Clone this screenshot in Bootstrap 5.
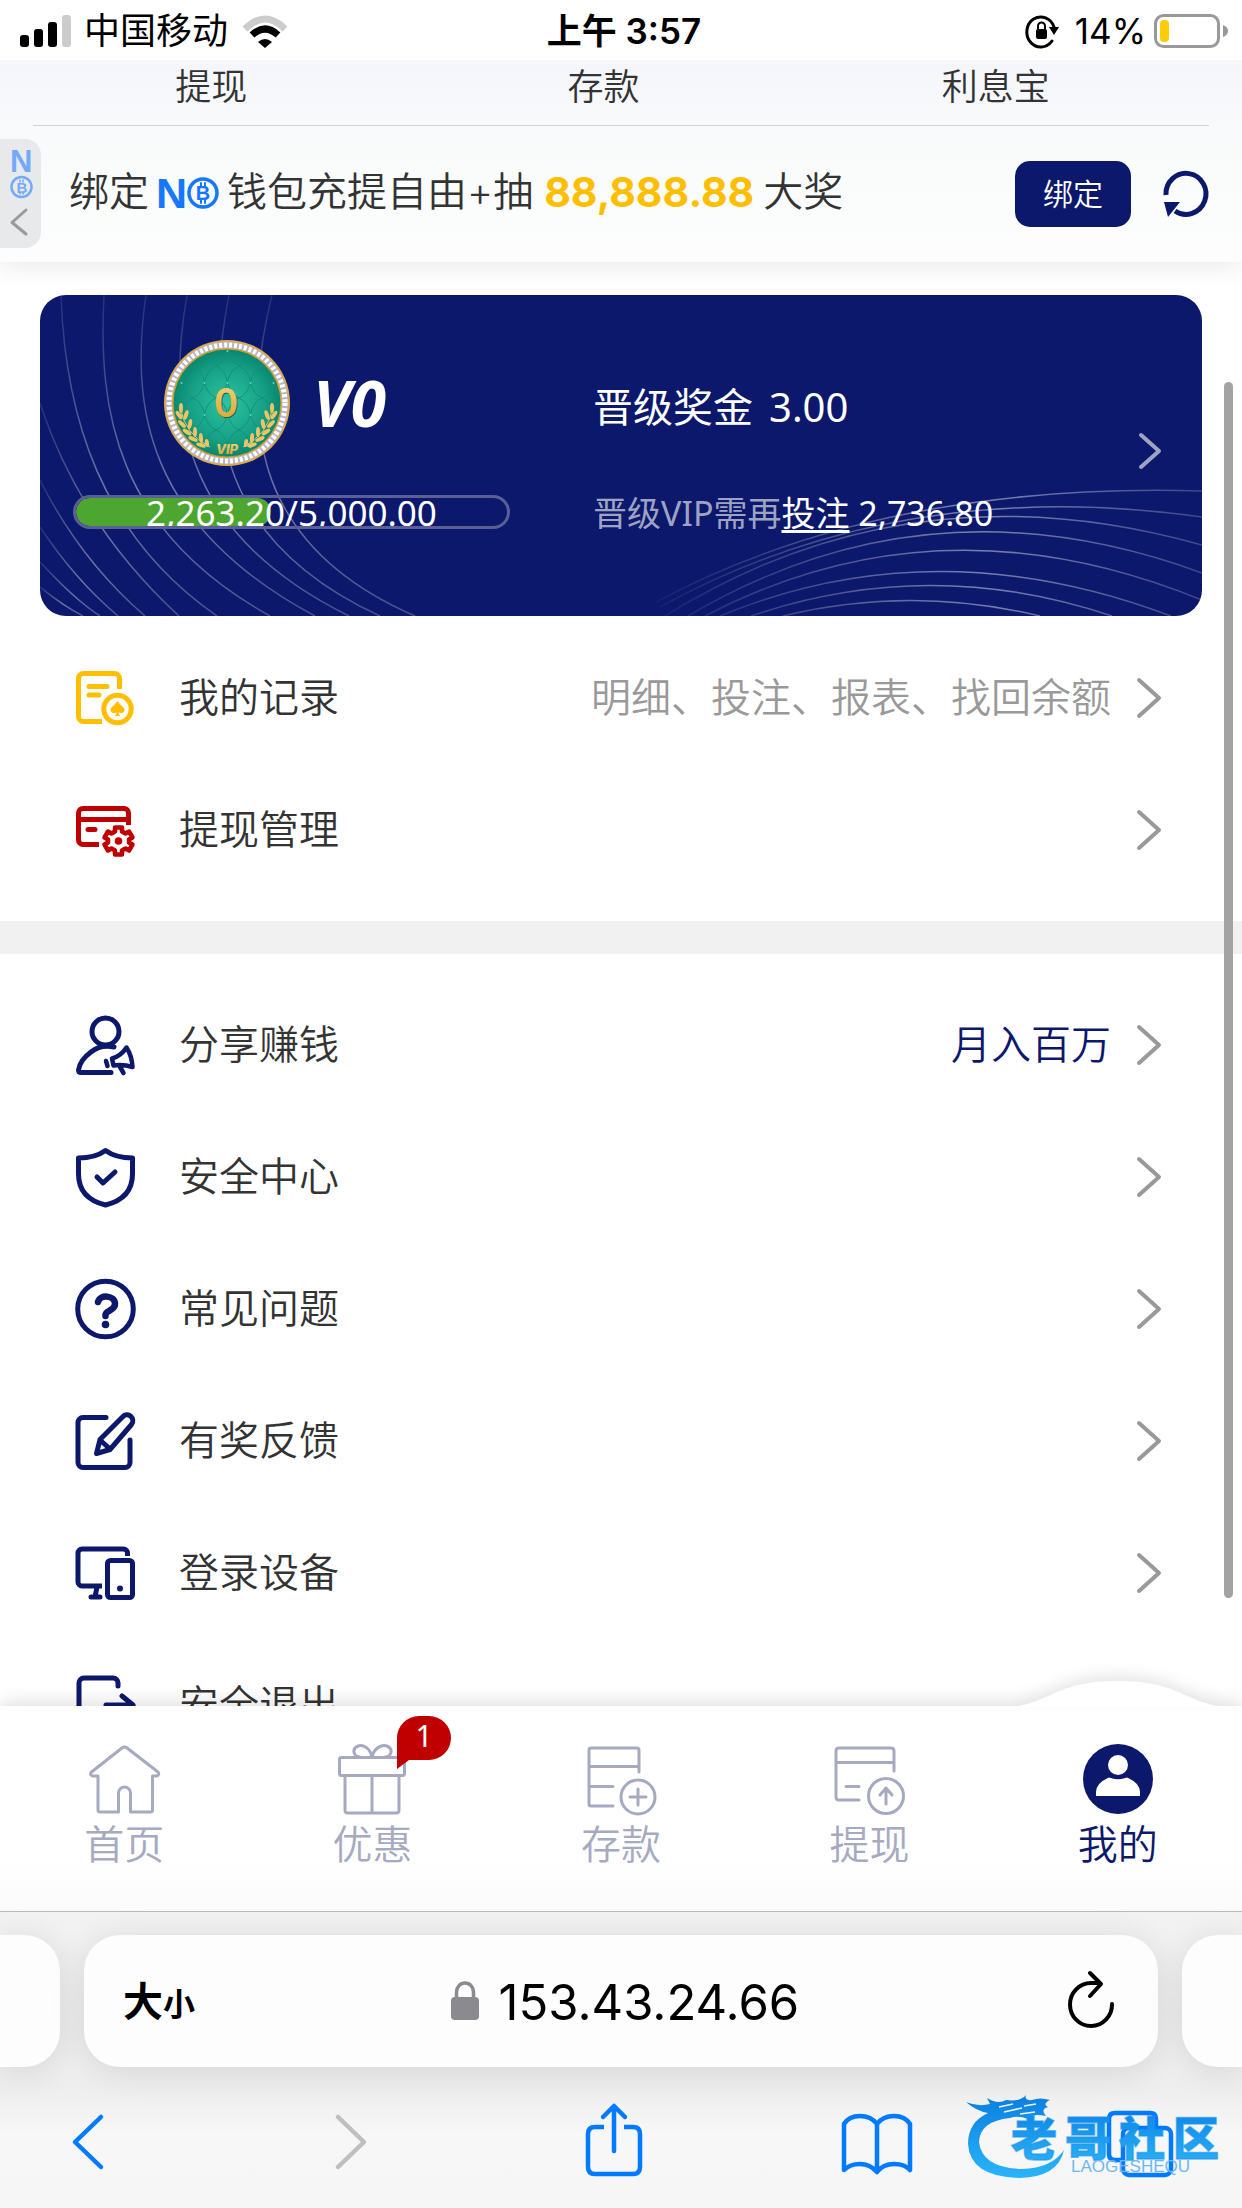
<!DOCTYPE html>
<html lang="zh-CN">
<head>
<meta charset="utf-8">
<meta name="viewport" content="width=device-width, initial-scale=1">
<title>我的</title>
<link href="https://cdn.jsdelivr.net/npm/bootstrap@5.3.0/dist/css/bootstrap.min.css" rel="stylesheet">
<style>
:root{--navy:#0c186c;--ink:#333;--mute:#a6aac1;--ios:#007aff}
html,body{height:100%}
body{font-family:Inter,"Noto Sans CJK SC",sans-serif;font-size:40px;line-height:48px;color:var(--ink);background:#fff;overflow:hidden}
a{color:inherit;text-decoration:none}
svg{display:block;flex:none;overflow:visible}
button{border:0;background:none;padding:0;color:inherit}
.ln{fill:none;stroke:currentColor;stroke-linecap:round;stroke-linejoin:round}
.statusbar{height:60px;padding:2px 14px 0 20px;font-size:35px;line-height:58px;color:#000}
.clock{font-weight:600}
.sidecell{flex:1}
.carrier{font-size:36px;margin:0 14px 0 13px}
.topzone{background:linear-gradient(#f4f6fb,#f9fbfb 45%,#fdfdfd);box-shadow:0 4px 24px rgba(0,0,0,.09)}
.quick{padding:3px 50px 14px 15px;font-size:36px;font-weight:350}
.rule{height:1px;background:#d0d3d5;margin:0 33px}
.bindrow{height:136px;padding:0 33px 0 69px}
.bindtext{font-size:40px;padding-bottom:4px;font-weight:350}
.prize{color:#ffbf00;font-weight:700;font-size:41px;margin:0 9px 0 11px}
.bindbtn{background:var(--navy);color:#fff;border-radius:15px;font-size:30px;width:116px;height:66px;line-height:60px;font-weight:350}
.sidetab{left:0;top:79px;width:41px;height:109px;background:#e8e9ea;border-radius:0 16px 16px 0}
.vip{margin:33px 40px 16px;background:var(--navy);border-radius:26px;color:#fff;height:321px;overflow:hidden;font-family:"Noto Sans","Noto Sans CJK SC",sans-serif}
.waves{inset:0}
.vipbody{height:100%;padding:0 40px 0 33px}
.vipleft{width:437px;margin-right:83px;padding-top:45px}
.level{font-size:64px;line-height:64px;font-weight:700;font-style:italic}
.barwrap{height:34px;border:3px solid #5a6096;border-radius:17px;margin-top:29px;font-size:35px;line-height:30px;overflow:hidden}
.barfill{background:#4da62f;border-radius:14px;height:100%}
.vipright{padding-top:88px}
.need{font-size:34px;margin-top:58px;color:#9ea3c4}
.need a{color:#fff;text-decoration:underline;text-decoration-thickness:3px;text-underline-offset:4px}
.menurow{height:132px;padding:0 81px 0 75px;font-size:40px;font-weight:350}
.menurow .name{margin-left:42px}
.menurow .note{margin-right:26px;color:#999}
.menurow .note.pro{color:var(--navy)}
.band{height:33px;background:#f1f1f1;margin:25px 0}
.navyc{color:var(--navy)}
.thumb{right:9px;top:382px;bottom:610px;width:9px;border-radius:5px;background:#a3a3a3;z-index:5}
.tabbar{height:205px;background:linear-gradient(#fff 75%,#fbfbfb);box-shadow:0 -2px 18px rgba(0,0,0,.15);color:var(--mute);z-index:3;padding-top:37px;font-weight:350}
.tabbar a{gap:6px}
.bump{left:50%;margin-left:-105px;filter:drop-shadow(0 -6px 7px rgba(0,0,0,.09));top:-62px}
.bubble{left:149px;top:-27px}
.browser{height:297px;border-top:1px solid #b9b9b9;background:linear-gradient(#f2f2f2,#eee 60%,#f7f7f7 75%,#f6f6f6);z-index:4}
.cards{margin-top:23px;gap:24px;height:132px;overflow:visible}
.urlcard,.peek{background:#fdfdfd;box-shadow:0 4px 34px rgba(0,0,0,.11)}
.urlcard{border-radius:36px;padding:4px 44px 0 39px}
.peek{width:60px}
.peek.l{border-radius:0 36px 36px 0}.peek.r{border-radius:36px 0 0 36px}
.side{width:74px;color:#000;font-weight:700}
.side.wide{width:86px}
.small-char{font-size:32px}
.lock{margin:0 20px 4px 0;color:#8a8a8f}
.url{border:0;background:none;outline:0;padding:0;width:300px;font-size:49px;line-height:60px;color:#000}
.tools{padding:36px 66px 0 52px;color:var(--ios);height:110px}
.tools button{width:72px;display:flex;justify-content:center}
.mark-logo{right:18px;bottom:26px}
</style>
</head>
<body>
<div class="d-flex flex-column vh-100 position-relative">
<header class="statusbar d-flex align-items-center flex-shrink-0 bg-white">
  <div class="sidecell d-flex align-items-center">
    <svg width="51" height="32" viewBox="0 0 51 32"><rect y="20" width="9" height="12" rx="3"/><rect x="14" y="14" width="9" height="18" rx="3"/><rect x="28" y="7" width="9" height="25" rx="3"/><rect x="42" width="9" height="32" rx="3" fill="#ccc"/></svg>
    <span class="carrier">中国移动</span>
    <svg width="46" height="33" viewBox="0 0 46 33"><path d="M3 14Q23-6 43 14" fill="none" stroke="#ccc" stroke-width="7"/><path d="M10 20Q23 8 36 20" fill="none" stroke="#000" stroke-width="7"/><path d="M16 27q7-6 14 0l-7 6z"/></svg>
  </div>
  <div class="clock">上午 3:57</div>
  <div class="sidecell d-flex align-items-center justify-content-end">
    <svg width="32" height="34" viewBox="0 0 32 34"><path class="ln" stroke-width="3" d="M27 13A14 15 0 1 0 25 27"/><path d="M22 13h10l-5 8z"/><rect x="9" y="15" width="11" height="10" rx="2"/><path class="ln" stroke-width="2" d="M11 15v-3a3.500 3.500 0 0 1 7 0v3"/></svg>
    <span class="ms-3 me-2">14%</span>
    <svg width="74" height="34" viewBox="0 0 74 34"><rect x="1.500" y="1.500" width="63" height="31" rx="8" fill="none" stroke="#999" stroke-width="3"/><rect x="6" y="6" width="9" height="22" rx="4" fill="#ffcc0a"/><path d="M69 11q5 2 5 6t-5 6z" fill="#999"/></svg>
  </div>
</header>

<main class="flex-fill overflow-hidden" style="min-height:0">
  <section class="topzone position-relative">
    <nav class="quick d-flex text-center">
      <a href="#" class="col">提现</a><a href="#" class="col">存款</a><a href="#" class="col">利息宝</a>
    </nav>
    <div class="rule"></div>
    <div class="bindrow d-flex align-items-center">
      <div class="bindtext d-flex align-items-center flex-fill text-nowrap">绑定
        <svg class="ms-2 me-2" width="62" height="34" viewBox="0 0 62 34" style="color:#1677ff"><text x="-1" y="33" font-family="Liberation Sans" font-weight="700" font-size="43" fill="currentColor">N</text><circle cx="46" cy="18" r="14" class="ln" stroke-width="3.500"/><text x="46" y="25" text-anchor="middle" font-family="Liberation Sans" font-weight="700" font-size="20" fill="currentColor">B</text><path class="ln" stroke-width="2" d="M44 8v3M48 8v3M44 25v3M48 25v3"/></svg>
        <span>钱包充提自由+抽</span><span class="prize">88,888.88</span><span>大奖</span>
      </div>
      <button class="bindbtn me-4" type="button">绑定</button>
      <button type="button" aria-label="刷新" class="navyc ms-2"><svg width="46" height="46" viewBox="0 0 46 46"><path d="M3 24A20 20.500 0 1 1 12 40" fill="none" stroke="currentColor" stroke-width="5"/><path d="M1 31h16L5 46z" fill="currentColor"/></svg></button>
    </div>
    <a href="#" class="sidetab position-absolute d-block" aria-label="钱包">
      <svg width="41" height="109" viewBox="0 0 41 109" style="color:#73a9f8"><text x="10" y="33" font-family="Liberation Sans" font-weight="700" font-size="31" fill="currentColor">N</text><circle cx="21.500" cy="48" r="10" class="ln" stroke-width="2.500"/><text x="22" y="53.500" text-anchor="middle" font-family="Liberation Sans" font-weight="700" font-size="15" fill="currentColor">B</text><path class="ln" stroke-width="1.500" d="M20 41v2M23 41v2M20 53v2M23 53v2"/><path d="M26 71L12 83.500L26 95" class="ln" style="stroke:#999" stroke-width="3"/></svg>
    </a>
  </section>

  <section class="vip position-relative">
    <svg class="waves position-absolute" width="1162" height="321" viewBox="0 0 1162 321" fill="none" stroke="#fff" stroke-width="1.500">
      <defs><linearGradient id="wl" x1="0" y1="0" x2="0" y2="1"><stop offset="0" stop-color="#fff" stop-opacity=".1"/><stop offset=".6" stop-color="#fff" stop-opacity=".4"/><stop offset="1" stop-color="#fff" stop-opacity=".25"/></linearGradient>
      <linearGradient id="wr" gradientUnits="userSpaceOnUse" x1="610" y1="0" x2="1162" y2="0"><stop offset="0" stop-color="#fff" stop-opacity=".03"/><stop offset=".6" stop-color="#fff" stop-opacity=".45"/><stop offset="1" stop-color="#fff" stop-opacity=".2"/></linearGradient></defs>
      <g stroke="url(#wl)"><path d="M232 0C205 110 200 245 375 321"/><path d="M189 0C168 110 165 240 340 321"/><path d="M147 0C128 110 135 235 309 321"/><path d="M106 0C90 110 105 230 275 321"/><path d="M64 0C58 115 75 235 230 321"/><path d="M21 0C25 120 60 240 177 321"/><path d="M0 108Q40 230 139 321"/><path d="M0 185Q40 265 105 321"/><path d="M0 232Q35 285 78 321"/><path d="M0 267Q35 305 60 321"/><path d="M0 292Q25 312 43 321"/></g>
      <g stroke="url(#wr)"><path d="M616 307Q840 187 1162 196"/><path d="M620 312Q860 180 1162 222"/><path d="M625 321Q870 168 1162 250"/><path d="M648 321Q890 178 1162 278"/><path d="M665 321Q900 198 1162 305"/><path d="M680 321Q895 232 1131 321"/><path d="M711 321Q890 260 1072 321"/><path d="M743 321Q870 290 1000 321"/></g>
    </svg>
    <div class="vipbody position-relative d-flex">
      <div class="vipleft">
        <div class="d-flex align-items-center" style="padding-left:91px">
          <svg width="126" height="126" viewBox="0 0 126 126">
            <defs><radialGradient id="em"><stop offset="0" stop-color="#2cc3a2"/><stop offset=".7" stop-color="#16a085"/><stop offset="1" stop-color="#08866e"/></radialGradient>
            <linearGradient id="gold" x1="0" y1="0" x2="0" y2="1"><stop offset="0" stop-color="#f3d77d"/><stop offset="1" stop-color="#d99f2b"/></linearGradient>
            <pattern id="quilt" width="23" height="32" patternUnits="userSpaceOnUse" x="6" y="10"><path d="M11.500 0Q14 12 23 16Q14 20 11.500 32Q9 20 0 16Q9 12 11.500 0" fill="none" stroke="#128f78" stroke-width="1"/><circle cx="11.500" cy="1" r="1" fill="#5ad8bd"/></pattern></defs>
            <circle cx="63" cy="63" r="63" fill="#d9ae4a"/><circle cx="63" cy="63" r="58" fill="none" stroke="#b9b4cc" stroke-width="6"/><circle cx="63" cy="63" r="58" fill="none" stroke="#fff" stroke-width="5" stroke-dasharray="3 2"/>
            <circle cx="63" cy="63" r="54" fill="url(#em)" stroke="#c99d32"/><circle cx="63" cy="63" r="53" fill="url(#quilt)"/>
            <text x="63" y="78" text-anchor="middle" font-family="Lato" font-weight="900" font-size="39" fill="#0b6b5a">0</text><text x="62" y="77" text-anchor="middle" font-family="Lato" font-weight="900" font-size="39" fill="url(#gold)">0</text>
            <g id="laurel" fill="#eac467" stroke="#eac467"><path d="M16 66Q20 94 46 107" fill="none" stroke-width="1"/><g stroke="none"><ellipse cx="17" cy="68" rx="2" ry="5"/><ellipse cx="15" cy="75" rx="2" ry="5" transform="rotate(-35 15 75)"/><ellipse cx="22" cy="75" rx="2" ry="5" transform="rotate(20 22 75)"/><ellipse cx="18" cy="84" rx="2" ry="5" transform="rotate(-45 18 84)"/><ellipse cx="26" cy="84" rx="2" ry="5" transform="rotate(10 26 84)"/><ellipse cx="23" cy="92" rx="2" ry="5" transform="rotate(-55 23 92)"/><ellipse cx="31" cy="92" rx="2" ry="5" transform="rotate(0 31 92)"/><ellipse cx="29" cy="99" rx="2" ry="5" transform="rotate(-65 29 99)"/><ellipse cx="37" cy="98" rx="2" ry="5" transform="rotate(-5 37 98)"/><ellipse cx="37" cy="105" rx="2" ry="5" transform="rotate(-75 37 105)"/><ellipse cx="43" cy="103" rx="2" ry="4" transform="rotate(-10 43 103)"/></g></g>
            <use href="#laurel" transform="translate(125 0) scale(-1 1)"/>
            <text x="63" y="114" text-anchor="middle" font-family="Inter" font-weight="800" font-style="italic" font-size="13" fill="url(#gold)">VIP</text>
          </svg>
          <span class="level" style="margin-left:23px">V0</span>
        </div>
        <div class="barwrap position-relative" role="progressbar" aria-valuenow="2263" aria-valuemin="0" aria-valuemax="5000" aria-label="晋级进度">
          <div class="barfill" style="width:45.264%"></div>
          <div class="position-absolute top-0 start-0 w-100 text-center">2,263.20/5,000.00</div>
        </div>
      </div>
      <div class="vipright flex-fill text-nowrap">
        <div>晋级奖金<span class="ms-3">3.00</span></div>
        <div class="need">晋级VIP需再<a href="#">投注</a> <span class="text-white">2,736.80</span></div>
      </div>
      <svg class="align-self-center ln" width="24" height="40" viewBox="0 0 24 40" style="color:#9ea3c4;margin-top:-9px" stroke-width="4"><path d="M3 4L21 20L3 36"/></svg>
    </div>
  </section>

  <nav>
    <a href="#" class="menurow d-flex align-items-center">
      <svg class="ln" width="62" height="62" viewBox="0 0 62 62" style="color:#ffbf00" stroke-width="5"><path stroke-linecap="butt" d="M44.500 22V11.500a5 5 0 0 0-5-5h-31a5 5 0 0 0-5 5v38a5 5 0 0 0 5 5H27"/><path d="M14 19.500h18M14 28h10"/><circle cx="42.500" cy="42" r="13.700"/><path d="M42.500 34q2 3 5 5.500c5 4-.5 9-4 5.500q0 2 1.500 4h-5q1.500-2 1.500-4c-3.500 3.500-9-1.500-4-5.500q3-2.500 5-5.500z" fill="currentColor" stroke="none"/></svg>
      <span class="name flex-fill">我的记录</span><span class="note">明细、投注、报表、找回余额</span>
      <svg class="ln" width="24" height="40" viewBox="0 0 24 40" style="color:#999" stroke-width="4"><path d="M2 2L22 20L2 38"/></svg>
    </a>
    <a href="#" class="menurow d-flex align-items-center">
      <svg class="ln" width="62" height="62" viewBox="0 0 62 62" style="color:#c00000" stroke-width="5"><path stroke-linecap="butt" d="M53.500 26V14a4.500 4.500 0 0 0-4.500-4.500H8A4.500 4.500 0 0 0 3.500 14v27a4.500 4.500 0 0 0 4.500 4.500h16M3.500 20.500h50"/><path d="M13 30.500h7"/><path stroke-width="4.500" d="M40 28.500h7v4l3.500 2 3.500-2 3.500 6-3.500 2v3l3.500 2-3.500 6-3.500-2-3.500 2v4h-7v-4l-3.500-2-3.500 2-3.500-6 3.500-2v-3l-3.500-2 3.500-6 3.500 2 3.500-2z"/><circle cx="43.500" cy="42" r="3.800" fill="currentColor" stroke="none"/></svg>
      <span class="name flex-fill">提现管理</span>
      <svg class="ln" width="24" height="40" viewBox="0 0 24 40" style="color:#999" stroke-width="4"><path d="M2 2L22 20L2 38"/></svg>
    </a>
  </nav>
  <div class="band"></div>
  <nav>
    <a href="#" class="menurow d-flex align-items-center">
      <svg class="ln navyc" width="62" height="62" viewBox="0 0 62 62" stroke-width="5"><circle cx="30.500" cy="17.500" r="13.500"/><path d="M39 33Q26 30 16 38Q5 46 3.500 56q0 2.500 2.500 2.500h30"/><path stroke-width="4.500" d="M31 47l1.500 5M37 44.500Q46 42 51.500 33.500Q57 42 57.500 53Q48 50 38.500 51.500zM45 53l3.500 6"/></svg>
      <span class="name flex-fill">分享赚钱</span><span class="note pro">月入百万</span>
      <svg class="ln" width="24" height="40" viewBox="0 0 24 40" style="color:#999" stroke-width="4"><path d="M2 2L22 20L2 38"/></svg>
    </a>
    <a href="#" class="menurow d-flex align-items-center">
      <svg class="ln navyc" width="62" height="62" viewBox="0 0 62 62" stroke-width="5"><path d="M30.500 4.500C23 10 14 12 3.500 12v16C3.500 45 14 55 30.500 59C47 55 57.500 45 57.500 28V12C47 12 38 10 30.500 4.500z"/><path d="M22 31l6 6 12-11"/></svg>
      <span class="name flex-fill">安全中心</span>
      <svg class="ln" width="24" height="40" viewBox="0 0 24 40" style="color:#999" stroke-width="4"><path d="M2 2L22 20L2 38"/></svg>
    </a>
    <a href="#" class="menurow d-flex align-items-center">
      <svg class="ln navyc" width="62" height="62" viewBox="0 0 62 62" stroke-width="5"><circle cx="30.500" cy="31" r="27.800"/><path stroke-width="6.500" d="M23 24c2-8 17-7 17 2 0 7-9.500 6-9.500 11v1"/><circle cx="30.500" cy="46.500" r="3.800" fill="currentColor" stroke="none"/></svg>
      <span class="name flex-fill">常见问题</span>
      <svg class="ln" width="24" height="40" viewBox="0 0 24 40" style="color:#999" stroke-width="4"><path d="M2 2L22 20L2 38"/></svg>
    </a>
    <a href="#" class="menurow d-flex align-items-center">
      <svg class="ln navyc" width="62" height="62" viewBox="0 0 62 62" stroke-width="5"><path d="M31 7.500H8A5 5 0 0 0 3 12.500v40a5 5 0 0 0 5 5h42a5 5 0 0 0 5-5V30"/><path d="M21.500 43.500l3.500-14L48 6.500c5-5 13 2 8.500 8L35 39.500zM25 30l10 9"/></svg>
      <span class="name flex-fill">有奖反馈</span>
      <svg class="ln" width="24" height="40" viewBox="0 0 24 40" style="color:#999" stroke-width="4"><path d="M2 2L22 20L2 38"/></svg>
    </a>
    <a href="#" class="menurow d-flex align-items-center">
      <svg class="ln navyc" width="62" height="62" viewBox="0 0 62 62" stroke-width="5"><path stroke-linecap="butt" d="M52.500 14v-3a4 4 0 0 0-4-4H7a4 4 0 0 0-4 4v29a4 4 0 0 0 4 4h20"/><path d="M22 45l-2 10M16 55h9"/><rect x="32.500" y="18.500" width="25" height="37" rx="3"/><circle cx="45" cy="46.500" r="3" fill="currentColor" stroke="none"/></svg>
      <span class="name flex-fill">登录设备</span>
      <svg class="ln" width="24" height="40" viewBox="0 0 24 40" style="color:#999" stroke-width="4"><path d="M2 2L22 20L2 38"/></svg>
    </a>
    <a href="#" class="menurow d-flex align-items-center">
      <svg class="ln navyc" width="62" height="62" viewBox="0 0 62 62" stroke-width="5"><path d="M43 12V9a5 5 0 0 0-5-5H9a5 5 0 0 0-5 5v44a5 5 0 0 0 5 5h29a5 5 0 0 0 5-5v-3M31 31h26M47 22l11 9-11 9"/></svg>
      <span class="name flex-fill">安全退出</span>
    </a>
  </nav>
</main>
<div class="thumb position-absolute"></div>

<nav class="tabbar d-flex flex-shrink-0 position-relative text-center">
  <a href="#" class="col d-flex flex-column align-items-center"><svg class="ln" width="72" height="72" viewBox="0 0 72 72" stroke-width="3"><path d="M10 33H5q-4-1-1.500-4L34 5q2.500-2 5 0L70 29q2 3-1.500 4H64.500V67q0 2-2 2H42.500V50a6 6 0 0 0-12 0V69H12q-2 0-2-2z"/></svg>首页</a>
  <a href="#" class="col d-flex flex-column align-items-center position-relative"><svg class="ln" width="72" height="72" viewBox="0 0 72 72" stroke-width="3"><rect x="2.500" y="14.500" width="65" height="18" rx="2"/><path d="M8 33v34q0 3 3 3h48q3 0 3-3V33M35 33v37M35 14C33 5 26 1 21 3C14 6 17 14 23 14M35 14C37 5 45 1 50 3C57 6 54 14 48 14"/></svg>优惠
    <svg class="bubble position-absolute" width="54" height="54" viewBox="0 0 54 54"><path d="M0 53V22A22 22 0 0 1 22 0H32A22 22 0 0 1 32 44H12z" fill="#c00000"/><text x="27" y="31" text-anchor="middle" font-family="Noto Sans" font-weight="400" font-size="30" fill="#fff">1</text></svg></a>
  <a href="#" class="col d-flex flex-column align-items-center"><svg class="ln" width="72" height="72" viewBox="0 0 72 72" stroke-width="3"><path d="M54 29V7q0-2-2-2H6Q4 5 4 7V61q0 2 2 2H28M4 23.500h50M4 43.500h24"/><circle cx="53" cy="54" r="17"/><path d="M53 46v16M45 54h16"/></svg>存款</a>
  <a href="#" class="col d-flex flex-column align-items-center"><svg class="ln" width="72" height="72" viewBox="0 0 72 72" stroke-width="3"><path d="M61 28V8q0-3-3-3H6Q3 5 3 8V54q0 3 3 3H26M3 19.500h58M13 43.500h13"/><circle cx="53" cy="53" r="17.500"/><path d="M53 61V45M47 52l6-7 6 7"/></svg>提现</a>
  <a href="#" class="col d-flex flex-column align-items-center position-relative navyc"><svg class="bump position-absolute" width="210" height="26" viewBox="0 0 210 26"><path d="M0 26C40 20 45 0 105 0S170 20 210 26z" fill="#fff"/></svg><svg width="72" height="72" viewBox="0 0 72 72"><circle cx="36" cy="36" r="35" fill="currentColor"/><circle cx="36" cy="22" r="10" fill="#fff"/><path d="M14 53V49Q14 40 27 34.500Q36 38 45 34.500Q58 40 58 49V53z" fill="#fff"/></svg>我的</a>
</nav>

<footer class="browser flex-shrink-0 position-relative">
  <div class="cards d-flex">
    <div class="peek l"></div>
    <div class="urlcard flex-fill d-flex align-items-center justify-content-between">
      <button class="side wide text-start text-nowrap" type="button">大<span class="small-char">小</span></button>
      <div class="d-flex align-items-center">
        <svg width="28" height="40" viewBox="0 0 28 40" class="lock"><rect y="16" width="28" height="23" rx="4" fill="currentColor"/><path class="ln" stroke-width="3.500" d="M5.500 17V11a8.500 9 0 0 1 17 0v6"/></svg>
        <input class="url" type="text" value="153.43.24.66" aria-label="网址">
      </div>
      <button class="side d-flex justify-content-end pb-2" type="button" aria-label="重新载入"><svg class="ln" width="46" height="56" viewBox="0 0 46 56" stroke-width="4"><path d="M44 33A21 21.500 0 1 1 23 12H32M22 2L33 13L22 25"/></svg></button>
    </div>
    <div class="peek r"></div>
  </div>
  <div class="tools d-flex justify-content-between align-items-start">
    <button type="button" aria-label="后退"><svg class="ln" width="34" height="76" viewBox="0 0 34 76" stroke-width="4.500"><path d="M30 14L4 39L30 64"/></svg></button>
    <button type="button" aria-label="前进" style="color:#bfbfbf"><svg class="ln" width="34" height="76" viewBox="0 0 34 76" stroke-width="4.500"><path d="M4 14L30 39L4 64"/></svg></button>
    <button type="button" aria-label="分享"><svg class="ln" width="58" height="76" viewBox="0 0 58 76" stroke-width="4.500"><path stroke-linecap="butt" d="M19 24H10q-7 0-7 7V64q0 7 7 7H48q7 0 7-7V31q0-7-7-7H39"/><path d="M29 48V4M18 14L29 3L40 14"/></svg></button>
    <button type="button" aria-label="书签"><svg class="ln" width="72" height="76" viewBox="0 0 72 76" stroke-width="4.500"><path d="M36 21Q30 13 19 13T3 21V67Q9 61 19 61T36 69Q42 61 53 61T69 67V21Q64 13 53 13T36 21V69"/></svg></button>
    <button type="button" aria-label="标签页"><svg class="ln" width="68" height="76" viewBox="0 0 68 76" stroke-width="4.500"><rect x="17" y="25" width="48" height="47" rx="6"/><path d="M17 57H9q-6 0-6-6V16q0-6 6-6H44q6 0 6 6v8"/></svg></button>
  </div>
  <svg class="mark-logo position-absolute" width="260" height="92" viewBox="0 0 260 92">
    <defs><linearGradient id="lg" x1="0" y1="0" x2="0" y2="1"><stop offset="0" stop-color="#0b7fe0"/><stop offset="1" stop-color="#2ab4fa"/></linearGradient></defs>
    <path fill="url(#lg)" d="M2 12Q14 17 26 14L23 8Q34 15 42 10Q56 12 62 5Q60 11 68 10Q76 7 86 10Q78 14 84 17Q76 19 82 26Q68 23 64 29Q54 25 46 28Q16 31 15 52Q18 78 58 79Q88 78 100 60Q94 87 56 88Q6 87 4 54Q4 32 24 23Q12 21 2 12z"/>
    <path d="M35 17l14-3M40 22l18-4M60 16l12-2M56 24l15-2" stroke="#eaf4fd" stroke-width="1.500"/>
    <text x="47 101 155 209" y="65" font-family="Noto Sans CJK SC" font-weight="900" font-size="46" fill="url(#lg)" stroke="#1b95ee" stroke-opacity=".6" stroke-width="1.500">老哥社区</text>
    <text x="107" y="82" font-family="Liberation Sans" font-size="17" fill="#6db9ef">LAOGESHEQU</text>
  </svg>
</footer>
</div>
<script src="https://cdn.jsdelivr.net/npm/bootstrap@5.3.0/dist/js/bootstrap.bundle.min.js"></script>
</body>
</html>
